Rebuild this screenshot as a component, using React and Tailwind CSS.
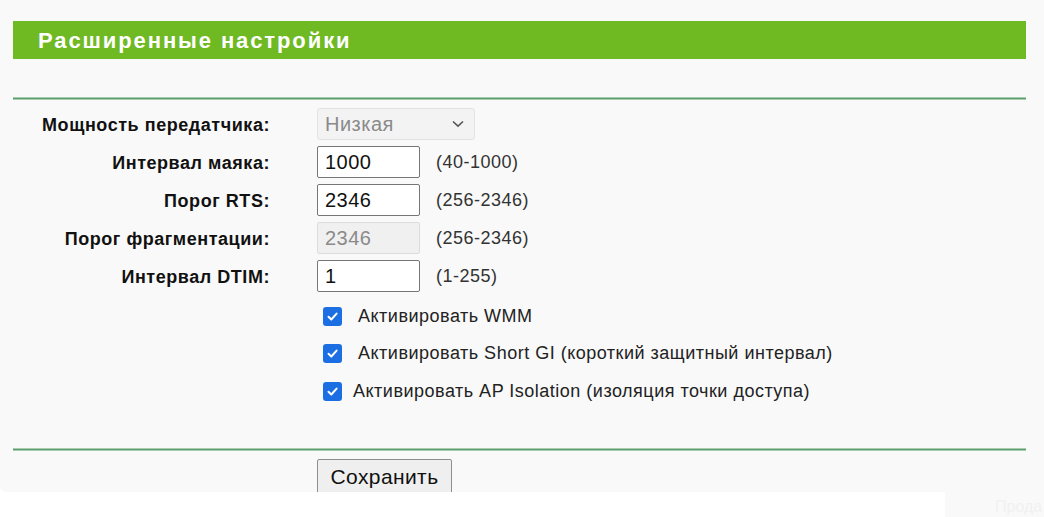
import React from 'react';

const font = { fontFamily: '"Liberation Sans", Arial, sans-serif' };

function Row({ label, children, hint }) {
    return (
        <div className="flex items-center h-[32px]">
            <div className="w-[257px] text-right text-[18px] font-bold text-[#111] tracking-[0.55px] pt-[2px]">{label}</div>
            <div className="ml-[47px] flex items-center">
                {children}
                {hint && <span className="ml-[16px] text-[18px] text-[#333] tracking-[0.5px]">{hint}</span>}
            </div>
        </div>
    );
}

function Check({ label, shift }) {
    return (
        <div className="flex items-center h-[20px]">
            <span className="w-[19px] h-[19px] rounded-[3px] bg-[#1b6fe3] flex items-center justify-center">
                <svg width="13" height="13" viewBox="0 0 13 13">
                    <path d="M2.5 6.8 L5.3 9.5 L10.6 3.6" fill="none" stroke="#fff" strokeWidth="2" strokeLinecap="round" strokeLinejoin="round" />
                </svg>
            </span>
            <span className={`${shift ? 'ml-[16px]' : 'ml-[11px]'} text-[18px] text-[#222] tracking-[0.5px]`}>{label}</span>
        </div>
    );
}

export default function App() {
    return (
        <div className="w-[1044px] h-[517px] bg-white overflow-hidden" style={font}>
            <div className="bg-[#f9f9f9] h-[492px] pt-[21px] px-[13px] rounded-bl-[6px]">
                <div className="w-[1013px] h-[38px] bg-[#6fb923] flex items-center pl-[25px]">
                    <h1 className="text-white font-bold text-[22px] tracking-[1.9px]">Расширенные настройки</h1>
                </div>

                <div className="mt-[38px] w-[1013px] h-[3px] bg-[#5f9b6f] border-y border-[#a7cdb0]" />

                <div className="mt-[8px] flex flex-col gap-[6px]">
                    <Row label="Мощность передатчика:">
                        <div className="w-[158px] h-[32px] rounded-[3px] border border-[#e2e2e2] bg-[#f3f3f3] flex items-center justify-between pl-[7px] pr-[9px] text-[20px] text-[#8a8a8a] tracking-[0.5px]">
                            <span>Низкая</span>
                            <svg width="14" height="10" viewBox="0 0 14 10">
                                <path d="M2 2.5 L7 7.2 L12 2.5" fill="none" stroke="#555" strokeWidth="1.6" />
                            </svg>
                        </div>
                    </Row>
                    <Row label="Интервал маяка:" hint="(40-1000)">
                        <div className="w-[103px] h-[32px] border border-[#767676] rounded-[2px] bg-white flex items-center pl-[7px] text-[20px] text-[#111] tracking-[0.5px]">1000</div>
                    </Row>
                    <Row label="Порог RTS:" hint="(256-2346)">
                        <div className="w-[103px] h-[32px] border border-[#767676] rounded-[2px] bg-white flex items-center pl-[7px] text-[20px] text-[#111] tracking-[0.5px]">2346</div>
                    </Row>
                    <Row label="Порог фрагментации:" hint="(256-2346)">
                        <div className="w-[103px] h-[32px] border border-[#dcdcdc] rounded-[2px] bg-[#f0f0f0] flex items-center pl-[7px] text-[20px] text-[#8a8a8a] tracking-[0.5px]">2346</div>
                    </Row>
                    <Row label="Интервал DTIM:" hint="(1-255)">
                        <div className="w-[103px] h-[32px] border border-[#767676] rounded-[2px] bg-white flex items-center pl-[7px] text-[20px] text-[#111] tracking-[0.5px]">1</div>
                    </Row>
                </div>

                <div className="mt-[14px] ml-[310px] flex flex-col gap-[17.5px]">
                    <Check label="Активировать WMM" shift />
                    <Check label="Активировать Short GI (короткий защитный интервал)" shift />
                    <Check label="Активировать AP Isolation (изоляция точки доступа)" />
                </div>

                <div className="mt-[47px] w-[1013px] h-[3px] bg-[#5f9b6f] border-y border-[#a7cdb0]" />

                <div className="mt-[8px] ml-[304px]">
                    <button className="w-[135px] h-[36px] border border-[#8f8f8f] rounded-t-[2px] bg-[#efefef] text-[21px] text-[#111] tracking-[0.4px]">Сохранить</button>
                </div>
            </div>
            <div className="flex h-[25px]">
                <div className="w-[945px] bg-white" />
                <div className="flex-1 bg-[#f9f9f9] pl-[50px] pt-[3px] text-[16px] text-[#f1f1f1] whitespace-nowrap">Прода</div>
            </div>
        </div>
    );
}
